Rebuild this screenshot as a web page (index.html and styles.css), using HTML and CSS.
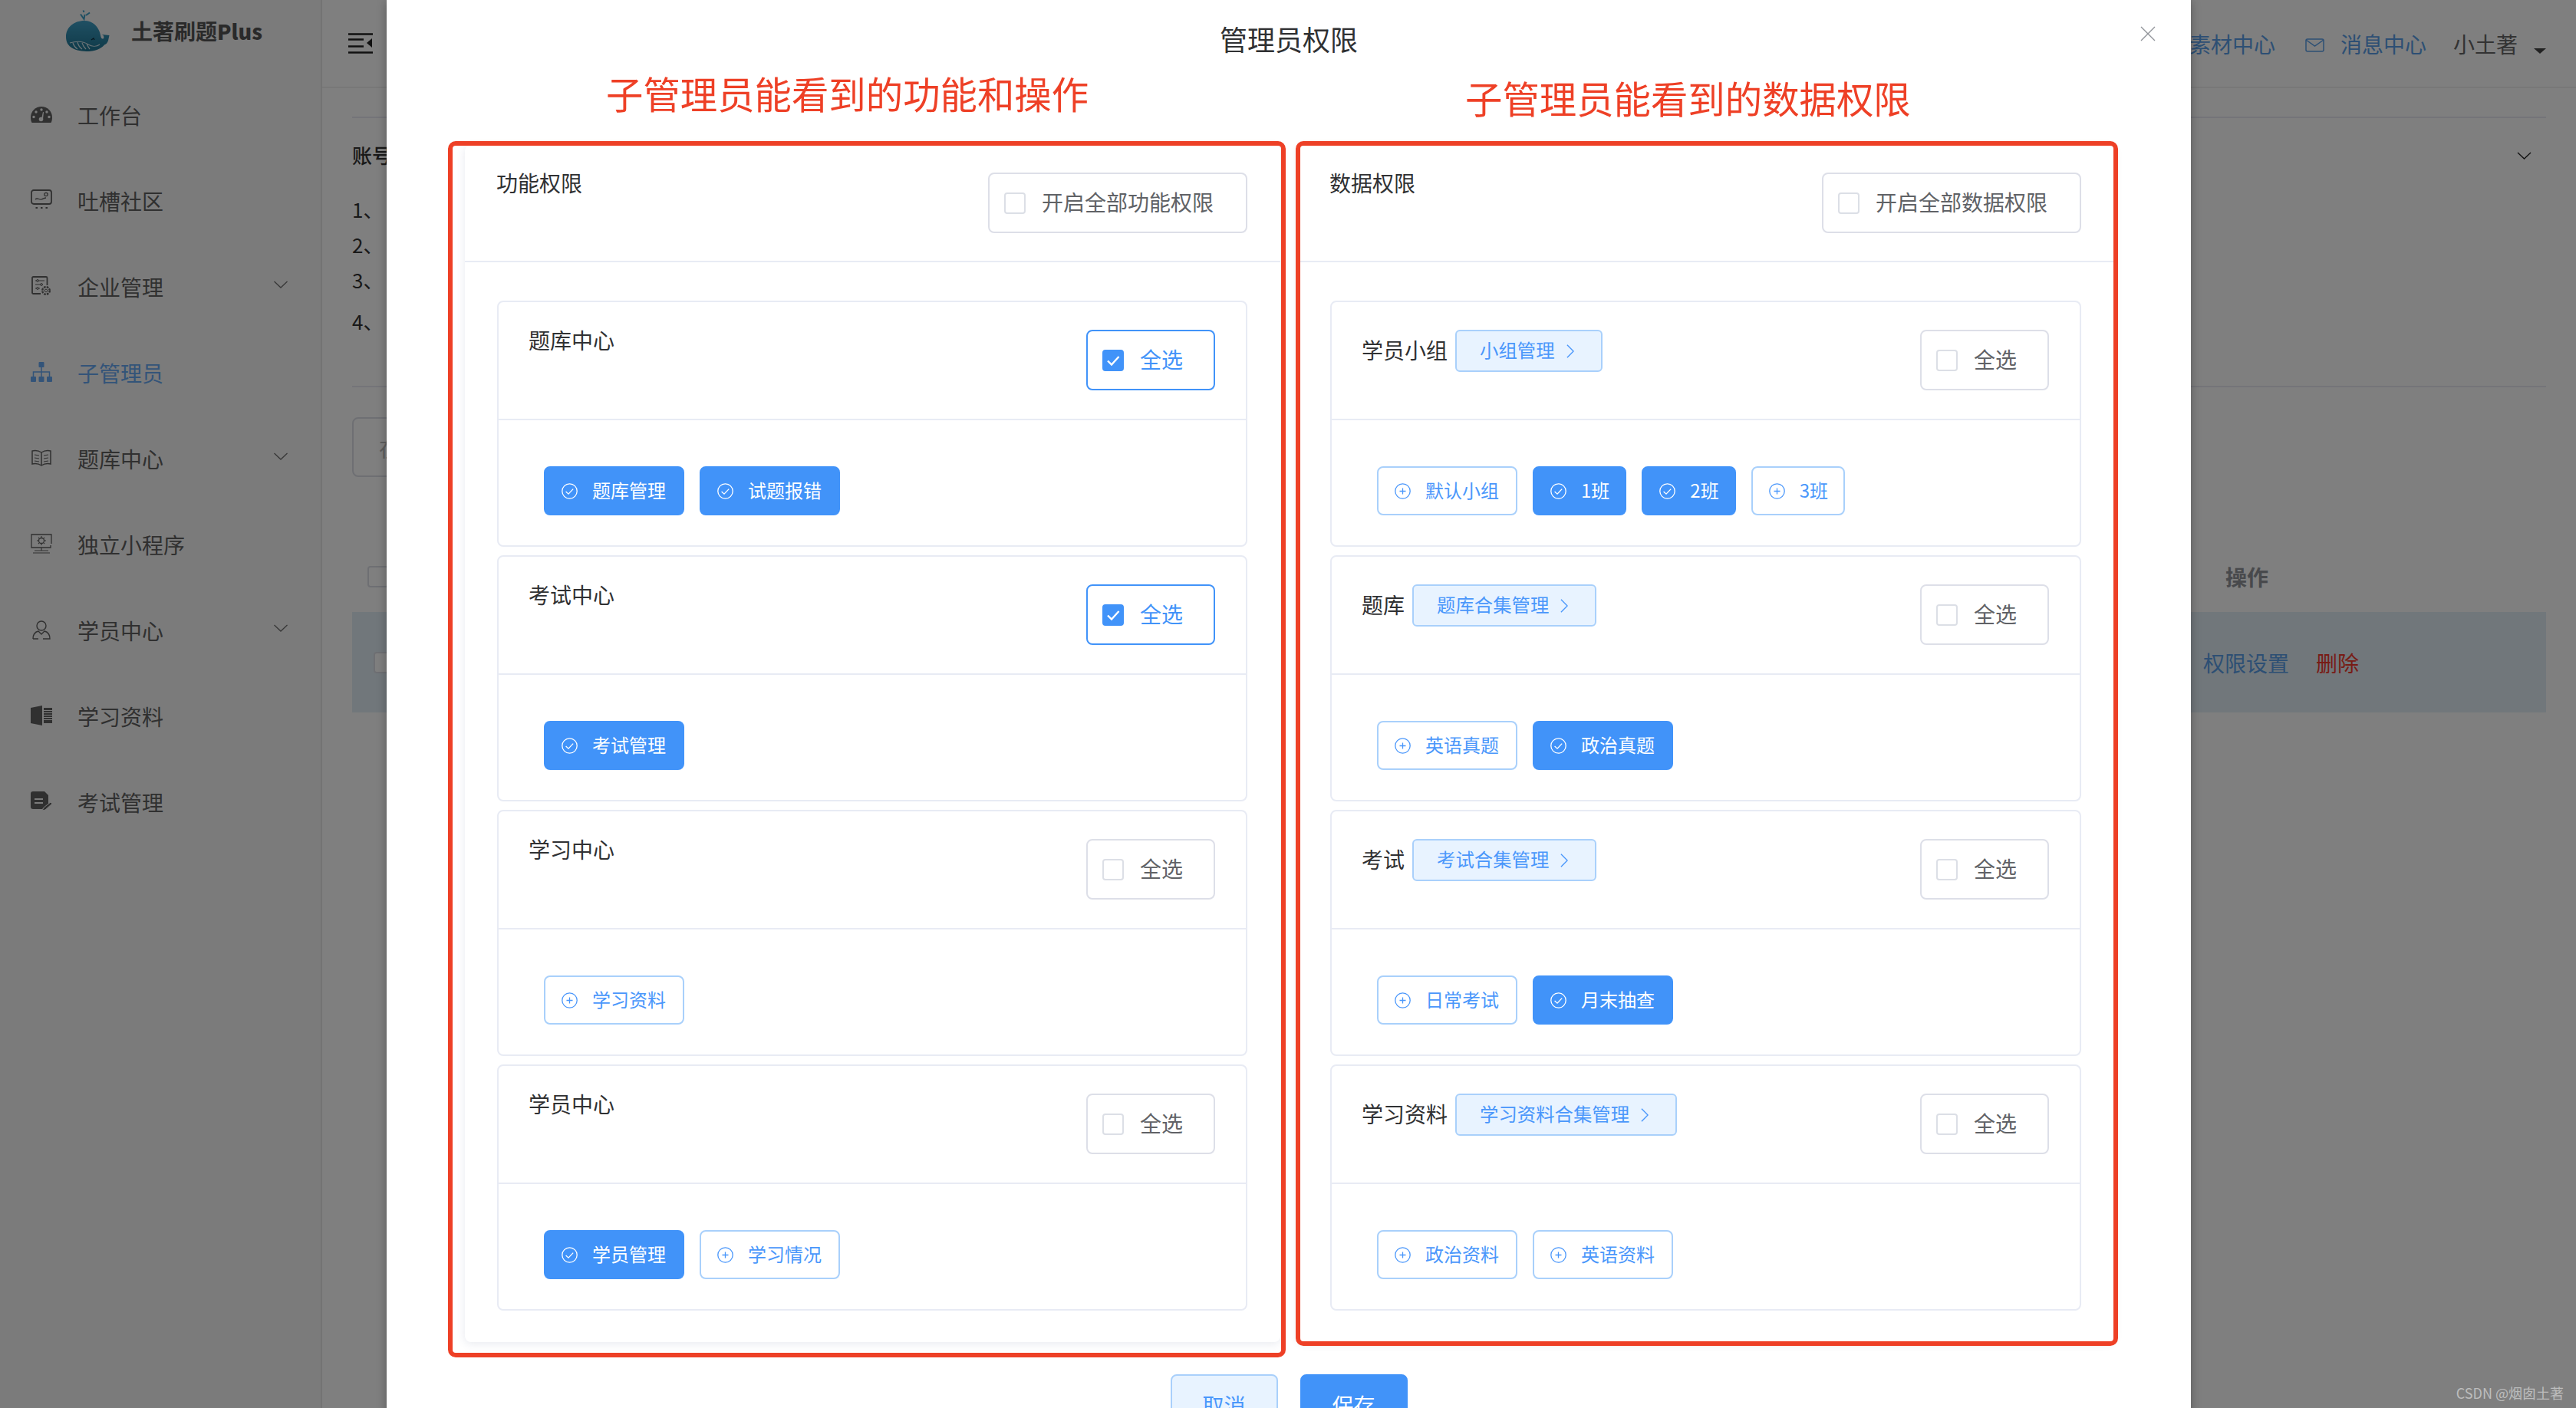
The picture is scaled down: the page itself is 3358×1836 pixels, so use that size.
FILE: index.html
```html
<!DOCTYPE html>
<html lang="zh-CN">

<head>
  <meta charset="UTF-8">
  <title>管理员权限</title>
  <link rel="stylesheet" href="styles.css">
</head>

<body>
  <!-- Shared icons -->
  <svg class="icon-defs">
    <symbol id="i-check" viewBox="0 0 21 21">
      <circle cx="10.5" cy="10.5" r="9.7" fill="none" stroke="currentColor" stroke-width="1.3"/>
      <path d="M5.6 11l3.4 3.2 6.2-6.6" fill="none" stroke="currentColor" stroke-width="1.3"/>
    </symbol>
    <symbol id="i-plus" viewBox="0 0 21 21">
      <circle cx="10.5" cy="10.5" r="9.7" fill="none" stroke="currentColor" stroke-width="1.3"/>
      <path d="M6.5 10.5h8M10.5 6.5v8" fill="none" stroke="currentColor" stroke-width="1.3"/>
    </symbol>
    <symbol id="i-down" viewBox="0 0 18 10">
      <path d="M.5 1l8.500 8 8.500-8" fill="none" stroke="currentColor" stroke-width="1.3"/>
    </symbol>
    <symbol id="i-right" viewBox="0 0 11 20">
      <path d="M1 1l9 9-9 9" fill="none" stroke="currentColor" stroke-width="1.500"/>
    </symbol>
    <symbol id="i-tick" viewBox="0 0 28 28">
      <path d="M7 14.500l5 5 9.500-10.500" fill="none" stroke="#fff" stroke-width="2.400"/>
    </symbol>
  </svg>

  <div class="app">
    <!-- Sidebar -->
    <aside class="sidebar">
      <div class="logo">
        <svg class="logo-img" viewBox="0 0 57 57">
          <defs>
            <linearGradient id="whale" x1="0" y1="0" x2="0" y2="1">
              <stop offset="0" stop-color="#3f9fc6"/>
              <stop offset="1" stop-color="#1f7592"/>
            </linearGradient>
          </defs>
          <path d="M22.500 1.500l1 2.500M19 6.500l4.500 6.500 1-6M26 8l5-3.500" fill="none" stroke="#3f9fc6" stroke-width="2"/>
          <path d="M0 36C0 24 10 15 24 15c11 0 17 7 20 15 1.500 5 1.500 8 3.500 8.500 2 .5 2.500-2 1-4.500l-2-1 10 1-1.500 7c-1 3-3 5-5 5.500-2.500 3-8 7.500-20 8.500C12 55 0 50 0 36z" fill="url(#whale)"/>
          <path d="M5 44c10-3 18-2 24 2 5 3 11 3 15 0M9 44c1 3 3 6 6 8M15 43c1 4 3 7 6 9M21 44c1 3 3 6 5 8M27 45c1 2 2 5 4 7" fill="none" stroke="#d5e6ec" stroke-width="1.200"/>
          <path d="M33 40l3-2 1 2" fill="none" stroke="#0d3140" stroke-width="1.400"/>
        </svg>
        <span class="logo-text">土著刷题<b>Plus</b></span>
      </div>
      <nav class="menu">
        <a class="menu-item">
          <svg class="menu-icon" viewBox="0 0 28 28"><path d="M1.500 25C.5 23 0 21 0 18 0 10 6.500 4 14 4s14 6 14 14c0 3-.5 5-1.500 7z" fill="currentColor"/><g fill="#f6f6f6"><circle cx="7" cy="11" r="1.700"/><circle cx="14" cy="8" r="1.700"/><circle cx="21" cy="11" r="1.700"/><circle cx="4" cy="17.500" r="1.700"/><circle cx="24" cy="17.500" r="1.700"/><circle cx="13.500" cy="20.500" r="2.800"/><path d="M14 20l2-9 1 .3-1 9z"/></g></svg>
          <span class="menu-text">工作台</span>
        </a>
        <a class="menu-item">
          <svg class="menu-icon" viewBox="0 0 28 28"><rect x="1" y="1" width="26" height="18" rx="3" fill="none" stroke="currentColor" stroke-width="1.800"/><path d="M6 13c3-3 5 1 8 0s4-2 6-2" fill="none" stroke="currentColor" stroke-width="1.300"/><circle cx="20" cy="6.500" r="2.200" fill="none" stroke="currentColor" stroke-width="1.300"/><path d="M6.500 24h2.500M13 24h2.500M19.500 24h2.500" stroke="currentColor" stroke-width="2"/></svg>
          <span class="menu-text">吐槽社区</span>
        </a>
        <a class="menu-item">
          <svg class="menu-icon" viewBox="0 0 28 28"><path d="M13 24H3.500c-1 0-1.500-.5-1.500-1.500V3.500C2 2.500 2.500 2 3.500 2H20c1 0 1.500.5 1.500 1.500V13" fill="none" stroke="currentColor" stroke-width="1.800"/><path d="M6 7h12M6 12h10M6 17h6" stroke="currentColor" stroke-width="1.200"/><circle cx="9" cy="7" r="1.400" fill="#f6f6f6" stroke="currentColor"/><circle cx="14" cy="12" r="1.400" fill="#f6f6f6" stroke="currentColor"/><circle cx="9" cy="17" r="1.400" fill="#f6f6f6" stroke="currentColor"/><circle cx="20" cy="20" r="4.800" fill="#f6f6f6" stroke="currentColor" stroke-width="2.400" stroke-dasharray="2.600 1.200"/><circle cx="20" cy="20" r="1.800" fill="none" stroke="currentColor"/></svg>
          <span class="menu-text">企业管理</span>
          <svg class="menu-arrow"><use href="#i-down"></use></svg>
        </a>
        <a class="menu-item active">
          <svg class="menu-icon" viewBox="0 0 28 28"><rect x="10.500" y="1" width="7" height="7" rx="1" fill="currentColor"/><rect x="0" y="20" width="7" height="7" rx="1" fill="currentColor"/><rect x="10.500" y="20" width="7" height="7" rx="1" fill="currentColor"/><rect x="21" y="20" width="7" height="7" rx="1" fill="currentColor"/><path d="M14 8v12M3.500 20v-6h21v6" fill="none" stroke="currentColor" stroke-width="1.500"/></svg>
          <span class="menu-text">子管理员</span>
        </a>
        <a class="menu-item">
          <svg class="menu-icon" viewBox="0 0 28 24"><path d="M2 3c5-1 9 0 12 2 3-2 7-3 12-2v17c-5-1-9 0-12 2-3-2-7-3-12-2zM14 5v17" fill="none" stroke="currentColor" stroke-width="1.500"/><path d="M5 8l6 1M5 12l6 1M5 16l6 1M23 8l-6 1M23 12l-6 1M23 16l-6 1" stroke="currentColor" stroke-width="1.100"/></svg>
          <span class="menu-text">题库中心</span>
          <svg class="menu-arrow"><use href="#i-down"></use></svg>
        </a>
        <a class="menu-item">
          <svg class="menu-icon" viewBox="0 0 28 28"><path d="M26 16v3H1V2h26v12" fill="none" stroke="currentColor" stroke-width="1.300"/><circle cx="14" cy="10" r="3.500" fill="none" stroke="currentColor" stroke-width="1.300"/><path d="M14 4v2M14 14v2M8 10h2M18 10h2M10 6l1 1M18 6l-1 1M10 14l1-1M18 14l-1-1" stroke="currentColor" stroke-width="1.100"/><path d="M14 19v4M5 23h18M3 26h22" stroke="currentColor" stroke-width="1.200"/></svg>
          <span class="menu-text">独立小程序</span>
        </a>
        <a class="menu-item">
          <svg class="menu-icon" viewBox="0 0 28 26"><circle cx="14" cy="8" r="6" fill="none" stroke="currentColor" stroke-width="1.400"/><path d="M3 25c0-6 3-9 7-10l4 4 4-4c4 1 7 4 7 10H16M3 25h7" fill="none" stroke="currentColor" stroke-width="1.400"/></svg>
          <span class="menu-text">学员中心</span>
          <svg class="menu-arrow"><use href="#i-down"></use></svg>
        </a>
        <a class="menu-item">
          <svg class="menu-icon" viewBox="0 0 28 28"><path d="M0 4l15-3v26L0 24z" fill="currentColor"/><path d="M17 4h11v20H17z" fill="currentColor"/><path d="M17 7.500h11M17 10.500h11M17 13.500h11M17 16.500h11M17 19.500h11" stroke="#f6f6f6" stroke-width="1"/></svg>
          <span class="menu-text">学习资料</span>
        </a>
        <a class="menu-item">
          <svg class="menu-icon" viewBox="0 0 28 26"><path d="M3 0h15l5 5v11l-8 7H3c-2 0-3-1-3-3V3c0-2 1-3 3-3z" fill="currentColor"/><path d="M5 10h11M5 15h11" stroke="#f6f6f6" stroke-width="2"/><path d="M15 25l2-4 9-7 2 2-9 8z" fill="currentColor" stroke="#f6f6f6"/></svg>
          <span class="menu-text">考试管理</span>
        </a>
      </nav>
    </aside>

    <div class="main">
      <!-- Top bar -->
      <header class="topbar">
        <svg class="fold" viewBox="0 0 32 27"><path d="M0 1.500h32M0 8.500h20M0 17.500h20M0 25.500h32" stroke="currentColor" stroke-width="2.500"/><path d="M31 7v12l-7-6z" fill="currentColor"/></svg>
        <div class="topbar-right">
          <a class="top-link">素材中心</a>
          <svg class="mail" viewBox="0 0 25 18"><rect x="1" y="1" width="23" height="16" rx="2" fill="none" stroke="currentColor" stroke-width="1.500"/><path d="M1 2l11.500 8L24 2" fill="none" stroke="currentColor" stroke-width="1.500"/></svg>
          <a class="top-link">消息中心</a>
          <span class="user">小土著</span>
          <span class="caret"></span>
        </div>
      </header>

      <div class="content">
        <section class="notice">
          <h4>账号</h4>
          <svg class="notice-arrow"><use href="#i-down"></use></svg>
          <ol class="notice-list">
            <li>1、</li>
            <li>2、</li>
            <li>3、</li>
            <li class="last">4、</li>
          </ol>
        </section>
        <div class="search-box">在</div>
        <div class="table-head">
          <span class="table-check"></span>
          <span class="table-action">操作</span>
        </div>
        <div class="table-row">
          <span class="table-check"></span>
          <span class="row-actions"><a>权限设置</a><a class="danger">删除</a></span>
        </div>
      </div>
    </div>
  </div>

  <div class="mask"></div>

  <!-- Dialog -->
  <div class="dialog">
    <div class="dialog-title">管理员权限</div>
    <svg class="dialog-close" viewBox="0 0 20 20"><path d="M1 1l18 18M19 1L1 19" stroke="currentColor" stroke-width="1.300"/></svg>

    <div class="panels">
      <section class="panel">
        <div class="panel-head">
          <span class="head-title">功能权限</span>
          <label class="check-btn"><span class="box"></span><span class="check-text">开启全部功能权限</span></label>
        </div>
        <div class="panel-body">
          <div class="group">
            <div class="group-head">
              <span class="head-title">题库中心</span>
              <label class="check-btn checked"><span class="box"><svg><use href="#i-tick"></use></svg></span><span class="check-text">全选</span></label>
            </div>
            <div class="group-body">
              <span class="tag on"><svg><use href="#i-check"></use></svg><span>题库管理</span></span>
              <span class="tag on"><svg><use href="#i-check"></use></svg><span>试题报错</span></span>
            </div>
          </div>
          <div class="group">
            <div class="group-head">
              <span class="head-title">考试中心</span>
              <label class="check-btn checked"><span class="box"><svg><use href="#i-tick"></use></svg></span><span class="check-text">全选</span></label>
            </div>
            <div class="group-body">
              <span class="tag on"><svg><use href="#i-check"></use></svg><span>考试管理</span></span>
            </div>
          </div>
          <div class="group">
            <div class="group-head">
              <span class="head-title">学习中心</span>
              <label class="check-btn"><span class="box"></span><span class="check-text">全选</span></label>
            </div>
            <div class="group-body">
              <span class="tag"><svg><use href="#i-plus"></use></svg><span>学习资料</span></span>
            </div>
          </div>
          <div class="group">
            <div class="group-head">
              <span class="head-title">学员中心</span>
              <label class="check-btn"><span class="box"></span><span class="check-text">全选</span></label>
            </div>
            <div class="group-body">
              <span class="tag on"><svg><use href="#i-check"></use></svg><span>学员管理</span></span>
              <span class="tag"><svg><use href="#i-plus"></use></svg><span>学习情况</span></span>
            </div>
          </div>
        </div>
      </section>

      <section class="panel">
        <div class="panel-head">
          <span class="head-title">数据权限</span>
          <label class="check-btn"><span class="box"></span><span class="check-text">开启全部数据权限</span></label>
        </div>
        <div class="panel-body">
          <div class="group">
            <div class="group-head">
              <div class="group-label"><span class="label-text">学员小组</span><a class="manage"><span>小组管理</span><svg><use href="#i-right"></use></svg></a></div>
              <label class="check-btn"><span class="box"></span><span class="check-text">全选</span></label>
            </div>
            <div class="group-body">
              <span class="tag"><svg><use href="#i-plus"></use></svg><span>默认小组</span></span>
              <span class="tag on narrow"><svg><use href="#i-check"></use></svg><span>1班</span></span>
              <span class="tag on narrow"><svg><use href="#i-check"></use></svg><span>2班</span></span>
              <span class="tag narrow"><svg><use href="#i-plus"></use></svg><span>3班</span></span>
            </div>
          </div>
          <div class="group">
            <div class="group-head">
              <div class="group-label"><span class="label-text">题库</span><a class="manage"><span>题库合集管理</span><svg><use href="#i-right"></use></svg></a></div>
              <label class="check-btn"><span class="box"></span><span class="check-text">全选</span></label>
            </div>
            <div class="group-body">
              <span class="tag"><svg><use href="#i-plus"></use></svg><span>英语真题</span></span>
              <span class="tag on"><svg><use href="#i-check"></use></svg><span>政治真题</span></span>
            </div>
          </div>
          <div class="group">
            <div class="group-head">
              <div class="group-label"><span class="label-text">考试</span><a class="manage"><span>考试合集管理</span><svg><use href="#i-right"></use></svg></a></div>
              <label class="check-btn"><span class="box"></span><span class="check-text">全选</span></label>
            </div>
            <div class="group-body">
              <span class="tag"><svg><use href="#i-plus"></use></svg><span>日常考试</span></span>
              <span class="tag on"><svg><use href="#i-check"></use></svg><span>月末抽查</span></span>
            </div>
          </div>
          <div class="group">
            <div class="group-head">
              <div class="group-label"><span class="label-text">学习资料</span><a class="manage"><span>学习资料合集管理</span><svg><use href="#i-right"></use></svg></a></div>
              <label class="check-btn"><span class="box"></span><span class="check-text">全选</span></label>
            </div>
            <div class="group-body">
              <span class="tag"><svg><use href="#i-plus"></use></svg><span>政治资料</span></span>
              <span class="tag"><svg><use href="#i-plus"></use></svg><span>英语资料</span></span>
            </div>
          </div>
        </div>
      </section>
    </div>

    <div class="dialog-footer">
      <button class="btn btn-plain">取消</button>
      <button class="btn btn-primary">保存</button>
    </div>

    <!-- Red annotations drawn over the dialog -->
    <div class="note note-left">子管理员能看到的功能和操作</div>
    <div class="note note-right">子管理员能看到的数据权限</div>
    <div class="mark mark-left"></div>
    <div class="mark mark-right"></div>
  </div>

  <div class="watermark">CSDN @烟囱土著</div>
</body>

</html>
```

FILE: styles.css
```css
* {
  box-sizing: border-box;
}

html,
body {
  margin: 0;
  height: 100%;
}

body {
  position: relative;
  width: 3358px;
  height: 1836px;
  overflow: hidden;
  font-family: "Noto Sans CJK SC", "Noto Sans", sans-serif;
  font-size: 28px;
  color: #606266;
  background-color: #fefefe;
}

.icon-defs {
  display: none;
}

.app {
  display: flex;
  height: 100%;
}

/* Sidebar */
.sidebar {
  flex: none;
  width: 420px;
  background-color: #f6f6f6;
  border-right: 2px solid #e6e6e6;
}

.logo {
  display: flex;
  align-items: flex-start;
  height: 96px;
  padding: 12px 0 0 86px;
}

.logo-img {
  flex: none;
  width: 57px;
  height: 57px;
}

.logo-text {
  margin: 9px 0 0 28px;
  font-size: 28px;
  line-height: 38px;
  font-weight: 700;
  color: #555;
}

.logo-text b {
  font-size: 27px;
}

.menu-item {
  display: flex;
  align-items: center;
  height: 112px;
  padding: 0 43px 0 40px;
  color: #606060;
  line-height: 40px;
}

.menu-item.active {
  color: #66a8f2;
}

.menu-text {
  margin-bottom: 4px;
}

.menu-icon {
  flex: none;
  width: 28px;
  height: 28px;
  margin: 0 33px 6px 0;
}

.menu-arrow {
  width: 18px;
  height: 10px;
  margin: 0 0 10px auto;
  color: #707070;
}

/* Main area */
.main {
  flex: 1;
  min-width: 0;
}

.topbar {
  display: flex;
  align-items: center;
  height: 115px;
  padding: 0 39px 0 34px;
  border-bottom: 2px solid #f0f0f0;
}

.fold {
  width: 32px;
  height: 27px;
  color: #222;
}

.topbar-right {
  display: flex;
  align-items: center;
  margin-left: auto;
  line-height: 40px;
}

.top-link {
  color: #5a9fe8;
}

.mail {
  width: 25px;
  height: 18px;
  margin: 4px 21px 0 39px;
  color: #5a9fe8;
}

.user {
  margin-left: 35px;
  color: #666;
}

.caret {
  width: 0;
  height: 0;
  margin: 20px 0 0 21px;
  border-left: 8px solid transparent;
  border-right: 8px solid transparent;
  border-top: 7px solid #444;
}

.content {
  width: 2860px;
  margin: 37px 0 0 39px;
}

.notice {
  position: relative;
  height: 353px;
  padding-top: 30px;
  border-top: 2px solid #e8e8f2;
  border-bottom: 2px solid #e8e8f2;
}

.notice h4 {
  margin: 0;
  font-size: 26px;
  line-height: 36px;
  font-weight: 500;
  color: #333;
}

.notice-arrow {
  position: absolute;
  top: 44px;
  right: 19px;
  width: 19px;
  height: 10px;
  color: #222;
}

.notice-list {
  margin: 35px 0 0;
  padding: 0;
  list-style: none;
  font-size: 26px;
  line-height: 36px;
  color: #333;
}

.notice-list li {
  margin-bottom: 10px;
}

.notice-list .last {
  margin-top: 18px;
}

.search-box {
  width: 400px;
  height: 78px;
  margin-top: 39px;
  padding: 18px 0 0 33px;
  border: 2px solid #dcdfe6;
  border-radius: 8px;
  line-height: 40px;
  color: #bbb;
}

.table-head {
  display: flex;
  align-items: center;
  height: 176px;
  padding: 83px 0 0 20px;
}

.table-check {
  flex: none;
  width: 28px;
  height: 28px;
  background-color: #fff;
  border: 2px solid #dcdfe6;
  border-radius: 4px;
}

.table-action {
  margin-left: 2394px;
  font-weight: 700;
  color: #909399;
  line-height: 40px;
}

.table-row {
  display: flex;
  align-items: center;
  height: 131px;
  padding-left: 28px;
  background-color: #e2eef6;
}

.row-actions {
  display: flex;
  gap: 35px;
  margin-left: 2357px;
  color: #5a9fe8;
  line-height: 40px;
}

.danger {
  color: #f0392b;
}

.mask {
  position: absolute;
  inset: 0;
  background-color: rgba(0, 0, 0, 0.5);
}

/* Dialog */
.dialog {
  position: absolute;
  top: 0;
  left: 504px;
  width: 2352px;
  height: 1900px;
  padding: 0 100px 0 102px;
  background-color: #fff;
  box-shadow: 0 2px 12px rgba(0, 0, 0, 0.3);
}

.dialog-title {
  height: 189px;
  padding-top: 25px;
  margin: 0 -100px 0 -102px;
  text-align: center;
  font-size: 36px;
  line-height: 50px;
  color: #303133;
}

.dialog-close {
  position: absolute;
  top: 34px;
  left: 2286px;
  width: 20px;
  height: 20px;
  color: #909399;
}

.panels {
  display: grid;
  grid-template-columns: 1063px 1064px;
  column-gap: 23px;
}

.panel {
  height: 1561px;
  background-color: #fff;
  border-radius: 8px;
  box-shadow: 0 2px 12px rgba(60, 70, 120, 0.12);
}

.panel-head {
  display: flex;
  justify-content: space-between;
  align-items: flex-start;
  padding: 36px 43px 36px 41px;
  border-bottom: 2px solid #e8ebf4;
}

.panel-head .check-btn {
  padding-right: 42px;
}

.head-title {
  font-size: 28px;
  line-height: 26px;
  color: #303133;
}

.panel-body {
  display: flex;
  flex-direction: column;
  gap: 11px;
  padding: 50px 43px 0 42px;
}

.group {
  border: 2px solid #e8ebf4;
  border-radius: 8px;
}

.group-head {
  display: flex;
  justify-content: space-between;
  align-items: flex-start;
  padding: 36px 40px 37px 39px;
  border-bottom: 2px solid #e8ebf4;
}

.group-label {
  display: flex;
  align-items: center;
  gap: 10px;
  font-size: 28px;
  line-height: 30px;
  color: #303133;
}

.label-text {
  margin-bottom: 3px;
}

.group-body {
  display: flex;
  gap: 20px;
  padding: 60px 59px 39px;
}

.check-btn {
  display: flex;
  align-items: center;
  gap: 21px;
  height: 79px;
  padding: 0 40px 0 19px;
  background-color: #fff;
  border: 2px solid #dddfe8;
  border-radius: 8px;
  line-height: 40px;
  color: #606266;
}

.check-btn.checked {
  color: #4193f9;
  border-color: #4193f9;
}

.check-text {
  margin-bottom: 3px;
}

.box {
  flex: none;
  width: 28px;
  height: 28px;
  background-color: #fff;
  border: 2px solid #dcdfe6;
  border-radius: 4px;
}

.box svg {
  display: block;
  width: 28px;
  height: 28px;
  margin: -2px;
}

.checked .box {
  background-color: #4193f9;
  border-color: #4193f9;
}

.tag {
  display: flex;
  align-items: center;
  height: 64px;
  padding: 0 22px 0 21px;
  background-color: #fff;
  border: 2px solid #a9d0fb;
  border-radius: 8px;
  font-size: 24px;
  line-height: 32px;
  color: #4a97fb;
}

.tag.narrow {
  padding-right: 20px;
}

.tag span {
  margin-bottom: 3px;
}

.tag svg {
  flex: none;
  width: 21px;
  height: 21px;
  margin-right: 19px;
}

.tag.on {
  color: #fff;
  background-color: #4193f9;
  border-color: #4193f9;
}

.manage {
  display: flex;
  align-items: center;
  height: 55px;
  padding: 0 35px 0 30px;
  background-color: #e8f3ff;
  border: 2px solid #a9d0fb;
  border-radius: 6px;
  font-size: 24.4px;
  line-height: 32px;
  color: #4a97fb;
}

.manage span {
  margin-bottom: 3px;
}

.manage svg {
  width: 10px;
  height: 20px;
  margin-left: 15px;
}

.dialog-footer {
  display: flex;
  justify-content: center;
  gap: 29px;
  margin: 42px -100px 0 -102px;
}

.btn {
  width: 140px;
  height: 80px;
  padding: 0;
  border: 2px solid #a9d0fb;
  border-radius: 8px;
  font-family: inherit;
  font-size: 28px;
  line-height: 40px;
}

.btn-plain {
  color: #4a97fb;
  background-color: #e8f3ff;
}

.btn-primary {
  color: #fff;
  background-color: #4193f9;
  border-color: #4193f9;
}

/* Annotations */
.note {
  position: absolute;
  font-size: 48.4px;
  line-height: 60px;
  color: #ee4026;
  white-space: nowrap;
}

.note-left {
  top: 91px;
  left: 286px;
}

.note-right {
  top: 97px;
  left: 1406px;
}

.mark {
  position: absolute;
  top: 184px;
  border: 6px solid #ee4026;
  border-radius: 10px;
}

.mark-left {
  left: 80px;
  width: 1092px;
  height: 1586px;
}

.mark-right {
  left: 1185px;
  width: 1072px;
  height: 1571px;
}

.watermark {
  position: absolute;
  right: 16px;
  bottom: 8px;
  font-size: 18px;
  line-height: 24px;
  color: #bdbdbd;
}
```
